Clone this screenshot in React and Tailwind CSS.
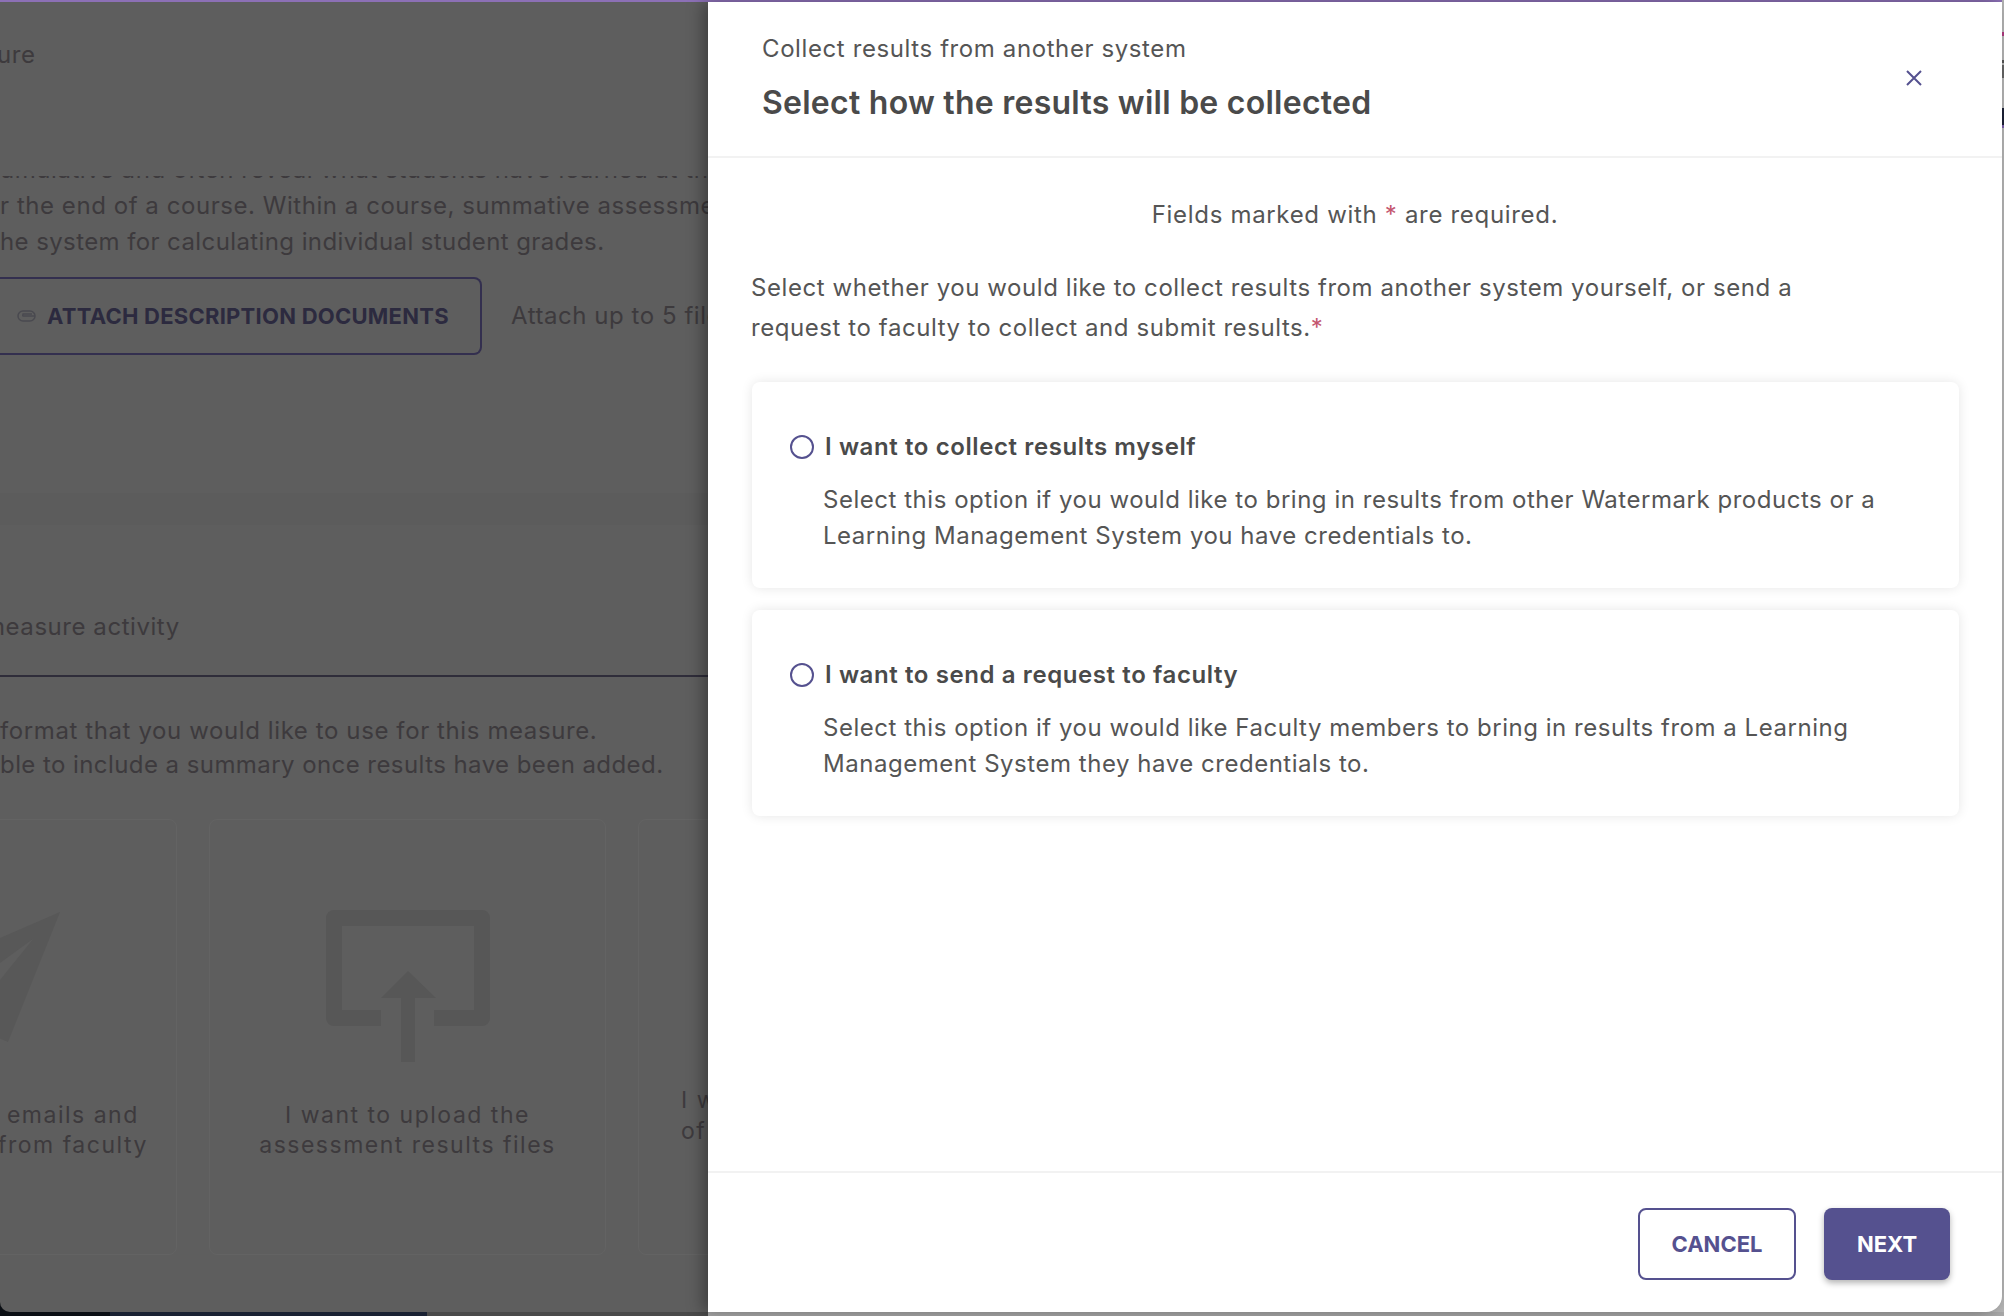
import React from 'react';

const Option = ({ title, lines }) => (
  <div className="ml-[1px] rounded-lg bg-white h-[206px] pt-[47px] pl-[38px] shadow-[0_0_12px_rgba(0,0,0,0.1)]">
    <div className="flex items-center h-[36px]">
      <span className="w-[24px] h-[24px] rounded-full border-2 border-[#55518f] mr-[11px]"></span>
      <span className="text-[24px] font-semibold text-[#4a4a4a] tracking-[0.6px]">{title}</span>
    </div>
    <div className="mt-[17px] ml-[33px] text-[24px] leading-[36px] text-[#555555] tracking-[0.53px]">
      {lines.map(line => <div key={line} className="whitespace-nowrap">{line}</div>)}
    </div>
  </div>
);

const BackgroundPage = () => (
  <div className="w-[708px] bg-[#0b0f14]">
    <div className="h-full flex flex-col overflow-hidden bg-[#5e5e5e] rounded-bl-[10px] text-[#3d3a3d] tracking-[0.55px]">
      <div className="h-[174px] pt-[35px] -ml-[3px] text-[24px] leading-[36px]">ure</div>

      <div className="h-[317px] overflow-hidden">
        <div className="-mt-[24px] text-[24px] leading-[36px] whitespace-nowrap">
          <div>umulative and often reveal what students have learned at the</div>
          <div>r the end of a course. Within a course, summative assessments</div>
          <div className="tracking-[0.4px]">he system for calculating individual student grades.</div>
        </div>
        <div className="flex items-center mt-[17px]">
          <div className="w-[482px] shrink-0 h-[78px] pl-[17px] flex items-center border-2 border-l-0 border-[#332f4f] rounded-r-lg">
            <svg width="20" height="14" viewBox="0 0 20 14" fill="none" stroke="#4a4a50" strokeWidth="1.5">
              <rect x="1" y="2" width="17" height="10" rx="5" />
              <path d="M18 7H6a2 2 0 0 1 0-2h9" />
            </svg>
            <span className="ml-[10px] text-[22px] font-bold text-[#2c2a3f] tracking-[0.25px] whitespace-nowrap">ATTACH DESCRIPTION DOCUMENTS</span>
          </div>
          <span className="ml-[29px] text-[24px] whitespace-nowrap">Attach up to 5 files</span>
        </div>
      </div>

      <div className="h-[32px] bg-[#5c5c5c]"></div>

      <div className="flex-1 overflow-hidden">
        <div className="h-[152px] border-b-2 border-[#2f2d3a] pt-[84px] text-[24px] leading-[36px] whitespace-nowrap">
          <span className="-ml-[16px]">measure activity</span>
        </div>
        <div className="mt-[37px] text-[24px] leading-[34px] whitespace-nowrap">
          <div className="tracking-[0.6px]">format that you would like to use for this measure.</div>
          <div className="tracking-[0.43px]">ble to include a summary once results have been added.</div>
        </div>
        <div className="flex gap-8 mt-[37px] -ml-[220px]">
          <div className="w-[397px] h-[436px] shrink-0 rounded-lg border border-[#636363] flex flex-col items-center pt-[90px]">
            <svg width="164" height="152" viewBox="0 0 164 152">
              <path d="M163 2 L-40 90 L60 110 L111 132 Z" fill="#585858" />
              <path d="M136 29 L103 53 L103 70 Z" fill="#5e5e5e" />
            </svg>
            <div className="mt-[38px] pl-[7px] text-center text-[23px] leading-[30px] tracking-[1.5px] whitespace-nowrap">I want to send emails and<br />collect results from faculty</div>
          </div>
          <div className="w-[397px] h-[436px] shrink-0 rounded-lg border border-[#636363] flex flex-col items-center pt-[90px]">
            <svg width="164" height="152" viewBox="0 0 164 152" fill="#575757">
              <path d="M8 0H156a8 8 0 0 1 8 8V108a8 8 0 0 1-8 8H108V100H148V16H16V100H55V116H8a8 8 0 0 1-8-8V8a8 8 0 0 1 8-8Z" />
              <path d="M82 61L110 88H89V152H75V88H55Z" />
            </svg>
            <div className="mt-[38px] text-center text-[23px] leading-[30px] tracking-[1.5px] whitespace-nowrap">I want to upload the<br />assessment results files</div>
          </div>
          <div className="w-[397px] h-[436px] shrink-0 rounded-lg border border-[#636363] pt-[265px] pl-[42px]">
            <div className="text-[23px] leading-[31px] tracking-[1.5px] whitespace-nowrap">I want to<br />of the</div>
          </div>
        </div>
      </div>
    </div>
  </div>
);

// the sliver of the page behind the dialog, at the far right of the window
const RightEdge = () => (
  <div className="w-[2px] flex flex-col">
    <div className="h-[30px]"></div>
    <div className="h-[4px] bg-[#b03a80]"></div>
    <div className="h-[24px]"></div>
    <div className="h-[3px] bg-[#555555]"></div>
    <div className="h-[2px]"></div>
    <div className="h-[13px] bg-[#666666]"></div>
    <div className="h-[30px]"></div>
    <div className="h-[17px] bg-[#1c2136]"></div>
    <div className="h-[3px] bg-[#7a5fa8]"></div>
  </div>
);

const App = () => (
  <div className="w-[2004px] h-[1316px] overflow-hidden flex flex-col bg-[#b5b5b5] font-['Inter',sans-serif]">
    <div className="h-[2px] w-[2002px] bg-[#8c70b6]"></div>

    <div className="h-[1310px] flex">
      <BackgroundPage />

      {/* dialog panel */}
      <div className="w-[1294px] flex flex-col bg-white rounded-br-[16px] shadow-[-5px_0_16px_rgba(0,0,0,0.35)] z-10">
        <div className="h-[156px] shrink-0 border-b-2 border-[#f2f2f2] pl-[54px] pr-[80px] flex items-start justify-between">
          <div>
            <div className="pt-[30px] text-[24px] leading-[34px] text-[#555555] tracking-[0.6px]">Collect results from another system</div>
            <div className="mt-[17px] text-[32px] leading-[40px] font-semibold text-[#4a4a4a] tracking-[0.25px]">Select how the results will be collected</div>
          </div>
          <svg className="mt-[68px]" width="16" height="16" viewBox="0 0 16 16" stroke="#55518f" strokeWidth="2" fill="none">
            <path d="M1 1L15 15M15 1L1 15" />
          </svg>
        </div>

        <div className="flex-1 pt-[40px] px-[43px]">
          <div className="text-center text-[24px] leading-[34px] text-[#555555] tracking-[0.68px]">
            Fields marked with <span className="text-[#c4566f]">*</span> are required.
          </div>
          <div className="mt-[36px] text-[24px] leading-[40px] text-[#555555] tracking-[0.57px]">
            Select whether you would like to collect results from another system yourself, or send a<br />
            request to faculty to collect and submit results.<span className="text-[#c4566f]">*</span>
          </div>
          <div className="mt-[34px] flex flex-col gap-[22px]">
            <Option
              title="I want to collect results myself"
              lines={[
                'Select this option if you would like to bring in results from other Watermark products or a',
                'Learning Management System you have credentials to.',
              ]}
            />
            <Option
              title="I want to send a request to faculty"
              lines={[
                'Select this option if you would like Faculty members to bring in results from a Learning',
                'Management System they have credentials to.',
              ]}
            />
          </div>
        </div>

        <div className="h-[141px] shrink-0 border-t-2 border-[#f2f2f2] pt-[35px] pr-[52px] flex justify-end gap-[28px]">
          <button className="w-[158px] h-[72px] rounded-lg border-2 border-[#55518f] bg-white text-[22px] font-bold text-[#55518f]">CANCEL</button>
          <button className="w-[126px] h-[72px] rounded-lg bg-[#55518f] text-[22px] font-bold text-white shadow-[0_3px_6px_rgba(0,0,0,0.3)]">NEXT</button>
        </div>
      </div>

      <RightEdge />
    </div>

    <div className="h-[4px] flex">
      <div className="w-[110px] bg-[#0b0f14]"></div>
      <div className="w-[317px] bg-[#1a2233]"></div>
      <div className="w-[281px] bg-[#4a4a4a]"></div>
      <div className="flex-1 bg-[#a8a8a8]"></div>
    </div>
  </div>
);

export default App;
